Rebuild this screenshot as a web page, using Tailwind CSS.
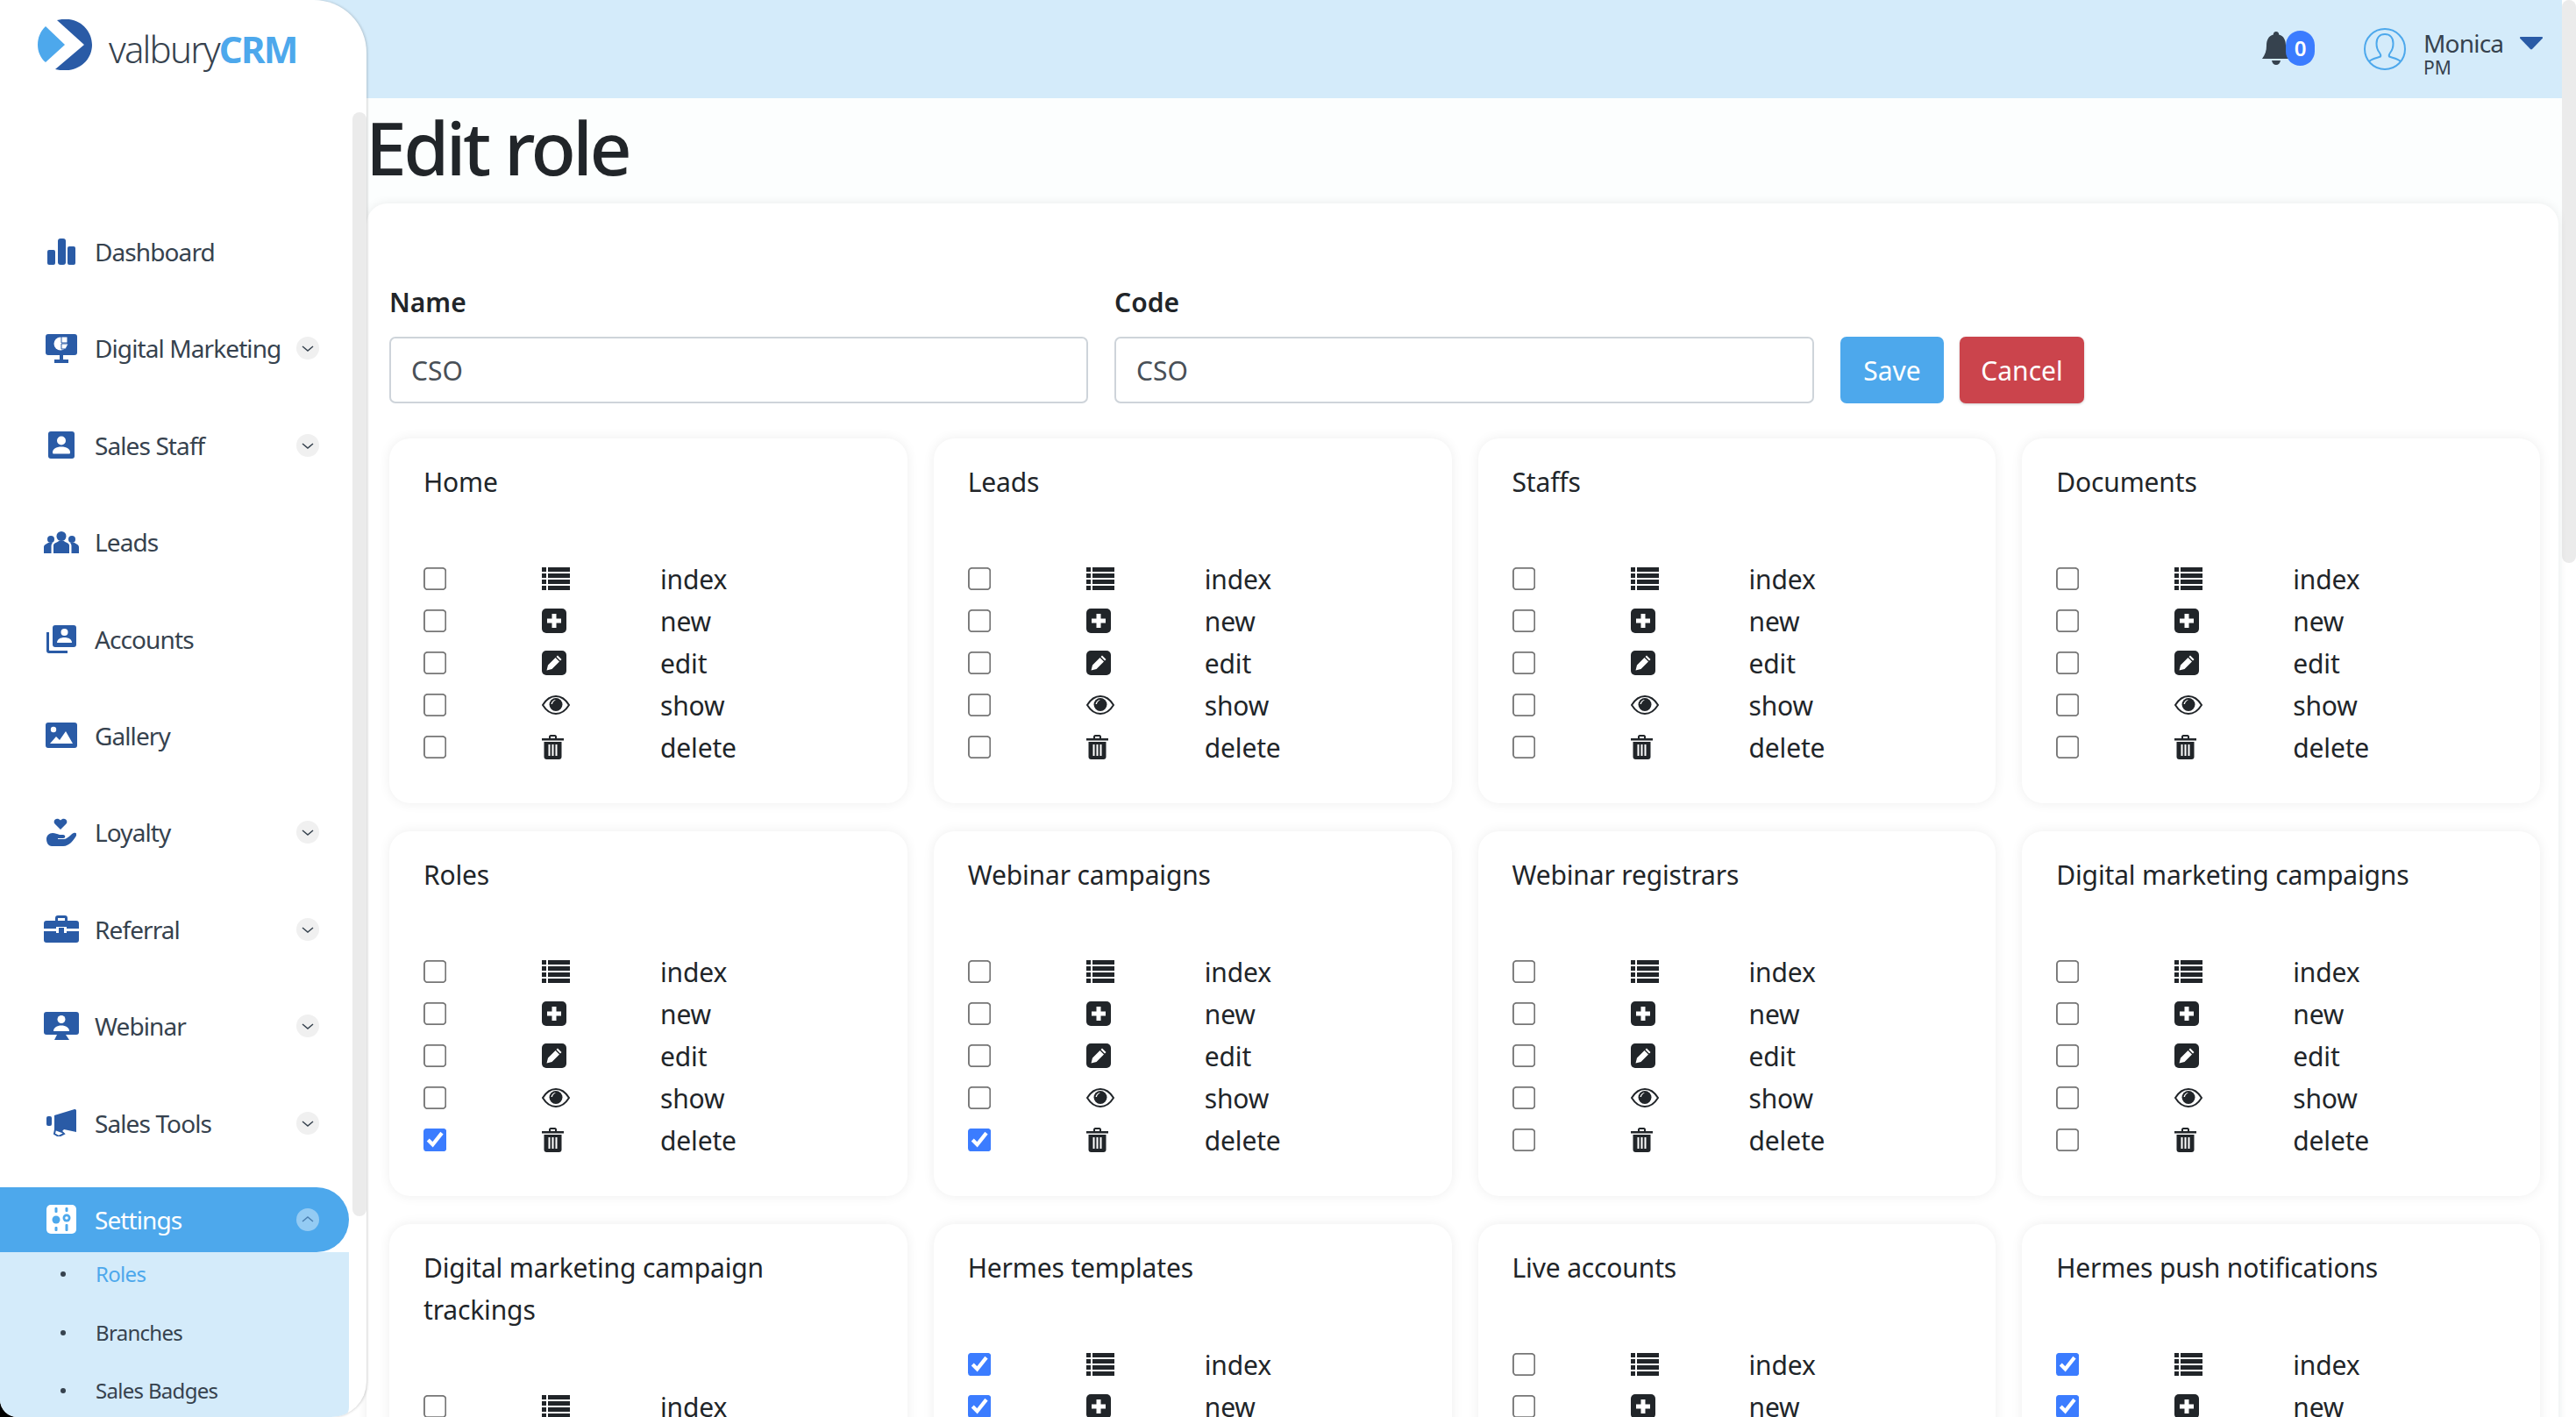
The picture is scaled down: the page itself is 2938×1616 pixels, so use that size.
<!DOCTYPE html>
<html lang="en">
<head>
  <meta charset="UTF-8" />
  <title>Edit role - valburyCRM</title>
  <script src="https://cdn.jsdelivr.net/npm/@tailwindcss/browser@4"></script>
</head>
<body class="font-['Noto_Sans',sans-serif] text-[#212529]">
  <div class="relative flex h-[1616px] w-[2938px] overflow-hidden bg-white">
    <!-- what shows behind the sidebar's rounded corners -->
    <div class="absolute bottom-0 left-0 h-6 w-6 bg-black"></div>
    <div class="absolute top-0 left-[340px] h-[112px] w-[100px] bg-[#d4ebfa]"></div>

    <!-- Sidebar -->
    <aside class="relative z-10 flex h-full w-[418px] shrink-0 flex-col overflow-hidden rounded-tr-[60px] rounded-br-[40px] rounded-bl-[20px] bg-white shadow-[1px_0_3px_rgba(0,0,0,0.18)]">
      <div class="absolute top-[128px] right-0 h-[1259px] w-4 rounded-full bg-[#ebebeb]"></div>
      <div class="flex h-[250px] shrink-0 items-start pt-[22px] pl-[43px]">
        <svg class="h-[58px] w-[62px]" viewBox="0 0 62 58">
          <path d="M9 8 L31 29 L9 49 C-3 39 -3 19 9 8Z" fill="#4da8ec" />
          <path d="M22 1 C46 -5 62 12 62 29 C62 48 44 63 20 57 L53 29Z" fill="#2a5ba6" />
        </svg>
        <div class="mt-[9px] ml-[19px] text-[42px] leading-[50px] font-light tracking-[-1.800px] text-[#36424e]">valbury<span class="font-bold text-[#4da8ec]">CRM</span></div>
      </div>
      <nav id="nav" class="relative"></nav>
      <ul class="mr-5 flex-1 rounded-br-[14px] bg-[#d4ebfa] text-[24px] tracking-[-0.700px] text-[#36424e]">
        <li class="mb-[9px] flex h-[50px] items-center pl-[69px]"><span class="h-[6px] w-[6px] rounded-full bg-[#36424e]"></span><span class="ml-[34px] text-[#4da8ec]">Roles</span></li>
        <li class="flex h-[66px] items-center pl-[69px]"><span class="h-[6px] w-[6px] rounded-full bg-[#36424e]"></span><span class="ml-[34px]">Branches</span></li>
        <li class="flex h-[66px] items-center pl-[69px]"><span class="h-[6px] w-[6px] rounded-full bg-[#36424e]"></span><span class="ml-[34px]">Sales Badges</span></li>
      </ul>
    </aside>

    <!-- Main column -->
    <div class="relative flex h-full w-[2504px] shrink-0 flex-col bg-[#fcfefe]">
      <header class="flex h-[112px] shrink-0 items-center justify-end bg-[#d4ebfa] pr-[22px] text-[#36424e]">
        <div class="relative mr-[55px] h-10 w-[60px]">
          <svg class="absolute top-0 left-0 h-[38px] w-[32px]" viewBox="0 0 32 38" fill="#36424e">
            <path d="M16 0c2 0 3.200 1.400 3.200 3.400C25 5 27 10 27 16c0 6 1.500 10 5 15H0c3.500-5 5-9 5-15 0-6 2-11 7.800-12.600C12.800 1.400 14 0 16 0Z" />
            <path d="M11 33h10c-.500 3-2.500 5-5 5s-4.500-2-5-5Z" />
          </svg>
          <span class="absolute top-[-1px] left-[27px] flex h-10 w-[33px] items-center justify-center rounded-full bg-[#3b7cff] text-[24px] font-semibold text-white">0</span>
        </div>
        <svg class="h-[50px] w-[50px]" viewBox="0 0 50 50" fill="none" stroke="#4da8ec" stroke-width="2">
          <circle cx="25" cy="25" r="23" />
          <path d="M7 39c3-3 9-4 13-5.500 1-1.500 0-3-1.500-5-2-2.500-3-6-3-10C15.500 12 19 8 25 8s9.500 4 9.500 10.500c0 4-1 7.500-3 10-1.500 2-2.500 3.500-1.500 5 4 1.500 10 2.500 13 5.500" />
        </svg>
        <div class="mt-[10px] ml-[19px] w-[105px]">
          <div class="text-[28px] leading-[32px] tracking-[-0.800px]">Monica</div>
          <div class="text-[21px] leading-[24px]">PM</div>
        </div>
        <svg class="mb-[14px] ml-[5px] h-[15px] w-[26px]" viewBox="0 0 26 15" fill="#2a5ba6"><path d="M1 0h24c1 0 1.500 1 .8 1.800L14 14c-.600.600-1.400.600-2 0L.200 1.800C-.500 1 0 0 1 0Z" /></svg>
      </header>

      <h1 class="mb-[8px] h-[112px] shrink-0 -ml-px text-[84px] leading-[112px] font-medium tracking-[-3.500px]">Edit role</h1>

      <section class="mr-[4px] flex-1 rounded-tl-[24px] rounded-tr-[24px] bg-white px-[26px] pt-[92px] shadow-[0_0_12px_rgba(0,0,0,0.08)]">
        <form class="flex items-end gap-[30px]">
          <label class="block w-[797px]">
            <span class="block h-[60px] text-[30px] leading-[42px] font-semibold">Name</span>
            <input value="CSO" class="h-[76px] w-full rounded-[7px] border-2 border-[#ced4da] bg-white px-[23px] text-[30px] text-[#495057]" />
          </label>
          <label class="block w-[798px]">
            <span class="block h-[60px] text-[30px] leading-[42px] font-semibold">Code</span>
            <input value="CSO" class="h-[76px] w-full rounded-[7px] border-2 border-[#ced4da] bg-white px-[23px] text-[30px] text-[#495057]" />
          </label>
          <div class="flex gap-[18px]">
            <button type="button" class="h-[76px] w-[118px] rounded-[7px] bg-[#4da8ec] text-[30px] text-white">Save</button>
            <button type="button" class="h-[76px] w-[142px] rounded-[7px] bg-[#cb444c] text-[30px] text-white shadow-[0_1px_3px_rgba(0,0,0,0.2)]">Cancel</button>
          </div>
        </form>
        <div id="grid" class="mt-[40px] grid w-[2453px] grid-cols-4 gap-x-[30px] gap-y-[32px]"></div>
      </section>
    </div>

    <!-- Page scrollbar -->
    <div class="h-full w-4 shrink-0 bg-white">
      <div class="h-[642px] w-4 rounded-full bg-[#ebebeb]"></div>
    </div>
  </div>

  <script>
    const chevronDown = '<path d="M7 11l6 5 6-5" />';
    const chevronUp = '<path d="M7 15l6-5 6 5" />';

    // Sidebar icons
    const navIcons = {
      dashboard: '<svg class="h-[30px] w-[32px]" viewBox="0 0 32 30" fill="#2a5ba6"><rect y="13" width="9" height="17" rx="2" /><rect x="12" width="9" height="30" rx="3" /><rect x="23" y="9" width="9" height="21" rx="2" /></svg>',
      digital: '<svg class="h-[33px] w-[36px]" viewBox="0 0 36 33" fill="#2a5ba6"><rect width="36" height="24" rx="3" /><rect x="16" y="24" width="4" height="6" /><rect x="10" y="29" width="16" height="4" /><circle cx="17" cy="11" r="7.500" fill="#fff" /><path d="M18 3h7v7h-7Z M18 11h8l-3 6h-5Z" fill="#fff" stroke="#2a5ba6" /></svg>',
      staff: '<svg class="h-[31px] w-[30px]" viewBox="0 0 30 31" fill="#2a5ba6"><rect width="30" height="31" rx="3" /><circle cx="15" cy="10.500" r="5" fill="#fff" /><path d="M5 24c0-4 4-6.500 10-6.500S25 20 25 24c0 1-.500 1.500-1.500 1.500h-17C5.500 25.500 5 25 5 24Z" fill="#fff" /></svg>',
      leads: '<svg class="h-[25px] w-[40px]" viewBox="0 0 40 25" fill="#2a5ba6"><circle cx="20" cy="5.500" r="5.500" /><path d="M11 25V16c0-3 5-3.500 6-5h6c1 1.500 6 2 6 5v9Z" /><circle cx="8" cy="9" r="4" /><path d="M0 25v-7c0-3 3-3.500 5-5h5c-1 1-1.500 2-1.500 4v8Z" /><circle cx="32" cy="9" r="4" /><path d="M40 25v-7c0-3-3-3.500-5-5h-5c1 1 1.500 2 1.500 4v8Z" /></svg>',
      accounts: '<svg class="h-[32px] w-[34px]" viewBox="0 0 34 32" fill="#2a5ba6"><path d="M0 8h3v20c0 .600.400 1 1 1h20v3H3c-2 0-3-1-3-3Z" /><rect x="7" width="27" height="25" rx="3" /><circle cx="20.500" cy="8" r="4" fill="#fff" /><path d="M12 20c0-4 4-6 8.500-6s8.500 2 8.500 6Z" fill="#fff" /></svg>',
      gallery: '<svg class="h-[29px] w-[36px]" viewBox="0 0 36 29" fill="#2a5ba6"><rect width="36" height="29" rx="3" /><circle cx="9" cy="8" r="3.200" fill="#fff" /><path d="M5 24l7-8 4 4 7-10 8 14Z" fill="#fff" /></svg>',
      loyalty: '<svg class="h-[32px] w-[34px]" viewBox="0 0 34 32" fill="#2a5ba6"><path d="M16 13l-6.500-6.500c-3-4 2.500-8 6.500-4 4-4 9.500 0 6.500 4Z" /><path d="M0 24c0-4 3-7 7-7 3 0 5 1 8 2h4c3 0 3 4 0 4h-6v1h7c4 0 8-6 11-7 3-1 4 1 3 3-3 5-8 12-15 12H6c-3 0-6-3-6-8Z" /></svg>',
      referral: '<svg class="h-[31px] w-[40px]" viewBox="0 0 40 31" fill="#2a5ba6"><path d="M13 6V3c0-2 1-3 3-3h8c2 0 3 1 3 3v3h-3V3h-8v3Z" /><path d="M3 6h34c2 0 3 1 3 3v6H26v-2h-12v2H0V9c0-2 1-3 3-3Z" /><path d="M0 18h14v2h12v-2h14v10c0 2-1 3-3 3H3c-2 0-3-1-3-3Z" /><rect x="17" y="14" width="6" height="6" /></svg>',
      webinar: '<svg class="h-[32px] w-[40px]" viewBox="0 0 40 32" fill="#2a5ba6"><rect width="40" height="26" rx="3" /><path d="M15 26h10l4 6H12Z" /><circle cx="20" cy="8.500" r="4.500" fill="#fff" /><path d="M11 22c0-4 4-6.500 9-6.500s9 2.500 9 6.500Z" fill="#fff" /></svg>',
      tools: '<svg class="h-[31px] w-[34px]" viewBox="0 0 34 31" fill="#2a5ba6"><rect y="8" width="6" height="11" rx="2" /><path d="M9 7 32 0c1 0 2 .500 2 1.500V26l-14-3-5 5-6-5Z" /><path d="M10 23l8 3 2 2-6 3-5-3Z" fill="#fff" stroke="#2a5ba6" stroke-width="2" /></svg>',
      settings: '<svg class="h-[33px] w-[34px]" viewBox="0 0 34 33"><rect width="34" height="33" rx="5" fill="#fff" /><g fill="#4da8ec"><rect x="9.500" y="3" width="3" height="6" rx="1" /><circle cx="11" cy="17" r="4.500" /><rect x="9.500" y="25" width="3" height="5" rx="1" /><rect x="21.500" y="3" width="3" height="5" rx="1" /><circle cx="23" cy="15" r="4.500" /><rect x="21.500" y="22" width="3" height="8" rx="1" /></g><circle cx="23" cy="15" r="1.800" fill="#fff" /></svg>'
    };

    const navItems = [
      ['dashboard', 'Dashboard', false],
      ['digital', 'Digital Marketing', true],
      ['staff', 'Sales Staff', true],
      ['leads', 'Leads', false],
      ['accounts', 'Accounts', false],
      ['gallery', 'Gallery', false],
      ['loyalty', 'Loyalty', true],
      ['referral', 'Referral', true],
      ['webinar', 'Webinar', true],
      ['tools', 'Sales Tools', true]
    ];

    let navHtml = '';
    navItems.forEach(([icon, label, hasSub]) => {
      navHtml += `<a class="mb-[36.4px] flex h-[74px] w-[398px] items-center text-[28px] tracking-[-0.900px] text-[#36424e]">
        <span class="ml-[45px] flex w-[50px] justify-center">${navIcons[icon]}</span>
        <span class="ml-[13px] flex-1">${label}</span>
        ${hasSub ? `<span class="mr-[34px] flex h-[26px] w-[26px] items-center justify-center rounded-full bg-[#f0f0f0]"><svg class="h-[26px] w-[26px]" viewBox="0 0 26 26" fill="none" stroke="#36424e" stroke-width="1.500">${chevronDown}</svg></span>` : ''}
      </a>`;
    });
    navHtml += `<a class="flex h-[74px] w-[398px] items-center rounded-r-[37px] bg-[#4da8ec] text-[28px] tracking-[-0.900px] text-white">
      <span class="ml-[45px] flex w-[50px] justify-center">${navIcons.settings}</span>
      <span class="ml-[13px] flex-1">Settings</span>
      <span class="mr-[34px] flex h-[26px] w-[26px] items-center justify-center rounded-full bg-white/40"><svg class="h-[26px] w-[26px]" viewBox="0 0 26 26" fill="none" stroke="#4b7fb0" stroke-width="1.500">${chevronUp}</svg></span>
    </a>`;
    document.getElementById('nav').innerHTML = navHtml;

    // Permission icons
    const permIcons = {
      index: '<svg class="h-[26px] w-[32px]" viewBox="0 0 32 26" fill="#212529"><path d="M0 0h5v5H0Z M7 0h25v5H7Z M0 7h5v5H0Z M7 7h25v5H7Z M0 14h5v5H0Z M7 14h25v5H7Z M0 21h5v5H0Z M7 21h25v5H7Z" /></svg>',
      new: '<svg class="h-[28px] w-[28px]" viewBox="0 0 28 28"><rect width="28" height="28" rx="5" fill="#212529" /><path d="M11.500 6h5v5.500H22v5h-5.500V22h-5v-5.500H6v-5h5.500Z" fill="#fff" /></svg>',
      edit: '<svg class="h-[28px] w-[28px]" viewBox="0 0 28 28"><rect width="28" height="28" rx="5" fill="#212529" /><path d="M18 5.500l4.500 4.500-1.500 1.500L16.500 7Z M15.500 8l4.500 4.500-8.500 8.500-6 1.500 1.500-6Z" fill="#fff" /></svg>',
      show: '<svg class="h-[22px] w-[32px]" viewBox="0 0 32 22"><path d="M1 11C5 4.500 10 1 16 1s11 3.500 15 10c-4 6.500-9 10-15 10S5 17.500 1 11Z" fill="none" stroke="#212529" stroke-width="2" /><circle cx="16" cy="10.500" r="7.500" fill="#212529" /><path d="M10.500 10c.500-3 3-5 5.500-5-2 1-4 3-4 5Z" fill="#fff" /></svg>',
      delete: '<svg class="h-[28px] w-[25px]" viewBox="0 0 25 28" fill="#212529"><path d="M0 4h8V2c0-1 1-2 2-2h5c1 0 2 1 2 2v2h8v2.500H0ZM10 2v2h5V2Z" /><path d="M2.500 8h20v17c0 2-1 3-3 3h-14c-2 0-3-1-3-3Z" /><path d="M7.500 11h2v13h-2Z M11.500 11h2v13h-2Z M15.500 11h2v13h-2Z" fill="#fff" /></svg>'
    };
    const perms = ['index', 'new', 'edit', 'show', 'delete'];

    // name, list of ticked permissions
    const modules = [
      ['Home', []], ['Leads', []], ['Staffs', []], ['Documents', []],
      ['Roles', ['delete']], ['Webinar campaigns', ['delete']], ['Webinar registrars', []], ['Digital marketing campaigns', []],
      ['Digital marketing campaign trackings', []], ['Hermes templates', ['index', 'new']], ['Live accounts', []], ['Hermes push notifications', ['index', 'new']]
    ];

    document.getElementById('grid').innerHTML = modules.map(([name, ticked]) => `
      <div class="rounded-[24px] bg-white px-[39px] pt-[26px] pb-[40px] text-[30px] tracking-[-0.150px] shadow-[0_0_14px_rgba(0,0,0,0.07)]">
        <h5 class="mb-[62px] leading-[48px]">${name}</h5>
        ${perms.map(p => `<div class="grid h-12 grid-cols-[135px_135px_1fr] items-center">
          <input type="checkbox" class="m-0 h-[13.900px] w-[13.900px] origin-left scale-[1.875] accent-[#3b7cff]" ${ticked.includes(p) ? 'checked' : ''} />
          <span class="flex">${permIcons[p]}</span>
          <span>${p}</span>
        </div>`).join('')}
      </div>`).join('');
  </script>
</body>
</html>
